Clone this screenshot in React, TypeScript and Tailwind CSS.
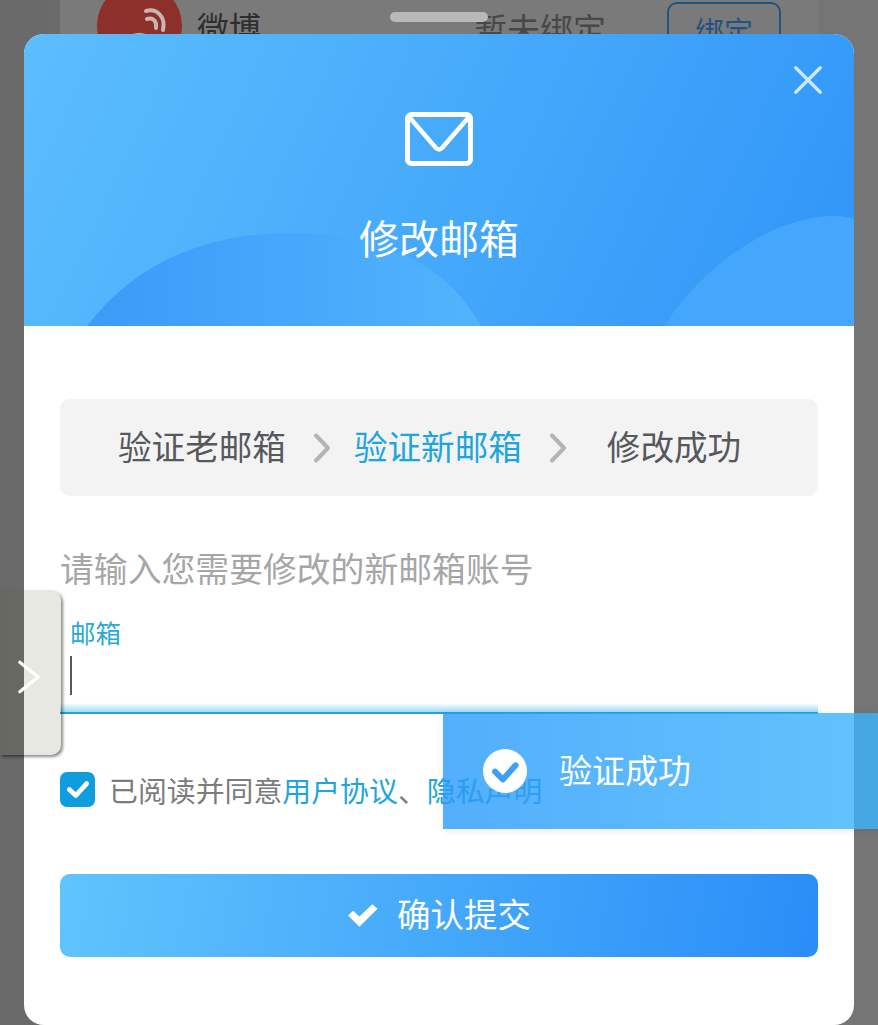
import React from "react";

const font = { fontFamily: '"Noto Sans CJK SC", "Noto Sans", sans-serif' };

function Chevron({ className }: { className?: string }) {
  return (
    <svg viewBox="0 0 20 30" className={className} fill="none" stroke="currentColor" strokeWidth="4" strokeLinecap="round" strokeLinejoin="round">
      <path d="M5 2.5 L17 15 L5 27.5" />
    </svg>
  );
}

function Step({ text, active, className }: { text: string; active?: boolean; className?: string }) {
  return <span className={`text-[33.6px] leading-none whitespace-nowrap ${active ? "text-[#1ea5dc]" : "text-[#56585c]"} ${className ?? ""}`}>{text}</span>;
}

export default function App() {
  return (
    <div style={font} className="relative h-[1025px] w-[878px] overflow-hidden bg-gradient-to-r from-[#696969] via-[#757575] to-[#757575]">
      {/* page behind the sheet */}
      <div className="mx-[60px] flex h-[34px] items-start overflow-hidden bg-[#7a7a7a] pl-[37px]">
        <div className="relative h-[85px] w-[85px] -translate-y-[17px] shrink-0 overflow-hidden rounded-full bg-[#8d302c]">
          <svg viewBox="0 0 85 85" className="h-full w-full" fill="none" stroke="#c9b5b0" strokeLinecap="round">
            <ellipse cx="38" cy="66" rx="18" ry="12" strokeWidth="6" transform="rotate(-20 38 66)" />
            <path d="M50 36 C56 34 60 38 59 45" strokeWidth="4" />
            <path d="M49 28 C60 25 69 34 66 47" strokeWidth="4" />
          </svg>
        </div>
        <span className="ml-[15px] mt-[4px] text-[32px] leading-[44px] text-[#2e2e2e]">微博</span>
        <span className="ml-[213px] mt-[6px] text-[33px] leading-[44px] text-[#484848]">暂未绑定</span>
        <div className="ml-[61px] mt-[2px] flex h-[50px] w-[114px] shrink-0 items-start justify-center rounded-[10px] border-2 border-[#1f5480] pt-[8px] text-[29px] leading-[36px] text-[#1f5480]">绑定</div>
      </div>

      {/* drag handle */}
      <div className="absolute left-[390px] top-[12px] z-20 h-[10px] w-[98px] rounded-full bg-[#b9b9b9]" />

      {/* sheet */}
      <div className="absolute left-[24px] top-[34px] h-[991px] w-[830px] overflow-hidden rounded-[20px] bg-white">
        <div className="relative flex h-[292px] flex-col items-center overflow-hidden bg-[linear-gradient(115deg,#5cbefd_0%,#46aafb_50%,#3094f8_100%)]">
          <svg viewBox="0 0 830 292" className="absolute inset-0 h-full w-full">
            <defs>
              <linearGradient id="hill" x1="0" x2="1" y1="0" y2="0">
                <stop offset="0" stopColor="#3a9bf9" />
                <stop offset="1" stopColor="#52b3fd" />
              </linearGradient>
            </defs>
            <path d="M63 292 C110 230 180 199 268 199 C350 199 420 225 457 292 Z" fill="url(#hill)" />
            <path d="M640 292 C680 230 750 182 810 182 C818 182 825 183 830 185 L830 292 Z" fill="#45a7fb" />
          </svg>
          <svg viewBox="0 0 24 24" className="absolute right-[32px] top-[32px] h-[28px] w-[28px] text-[#cbe8fe]" fill="none" stroke="currentColor" strokeWidth="2.8" strokeLinecap="round">
            <path d="M1.5 1.5 L22.5 22.5 M22.5 1.5 L1.5 22.5" />
          </svg>
          <svg viewBox="0 0 68 54" className="relative mt-[78px] h-[54px] w-[68px]" fill="none" stroke="white" strokeLinejoin="round" strokeLinecap="round">
            <rect x="2.5" y="2.5" width="63" height="49" rx="4" strokeWidth="5" />
            <path d="M5 6 L31 36 Q34 39 37 36 L63 6" strokeWidth="4.5" />
          </svg>
          <h1 className="relative mt-[41px] text-[40px] font-normal leading-[60px] text-white">修改邮箱</h1>
        </div>

        <div className="px-[36px] pt-[73px]">
          <div className="flex h-[97px] items-center rounded-[10px] bg-[#f3f3f4] pb-[4px] pl-[58px]">
            <Step text="验证老邮箱" />
            <Chevron className="ml-[25px] mt-[4px] h-[30px] w-[20px] text-[#b4b4b4]" />
            <Step text="验证新邮箱" active className="ml-[23px]" />
            <Chevron className="ml-[25px] mt-[4px] h-[30px] w-[20px] text-[#b4b4b4]" />
            <Step text="修改成功" className="ml-[40px]" />
          </div>

          <p className="mt-[50px] text-[33.85px] leading-[44px] whitespace-nowrap text-[#a6a6a6]">请输入您需要修改的新邮箱账号</p>

          <div className="relative mt-[24px] h-[100px] border-b-2 border-[#1ea5dc] pl-[10px]">
            <div className="text-[25.5px] leading-[36px] text-[#28a9de]">邮箱</div>
            <div className="mt-[6px] h-[39px] w-[2px] bg-[#55585c]" />
            <div className="absolute inset-x-0 bottom-0 h-[9px] bg-gradient-to-t from-[#9edcf6] to-transparent" />
          </div>

          <div className="mt-[55px] flex items-center">
            <div className="flex h-[35px] w-[35px] shrink-0 items-center justify-center rounded-[7px] bg-[#0f9de0]">
              <svg viewBox="0 0 24 24" className="h-[26px] w-[26px]" fill="none" stroke="white" strokeWidth="4.4" strokeLinejoin="round" strokeLinecap="round">
                <path d="M4 12.5 L10 18 L20 7" />
              </svg>
            </div>
            <p className="ml-[14px] text-[28.9px] leading-[40px] whitespace-nowrap text-[#7b7c7e]">
              已阅读并同意<span className="text-[#1ea5dc]">用户协议</span>、<span className="text-[#1ea5dc]">隐私声明</span>
            </p>
          </div>

          <button className="mt-[65px] flex h-[83px] w-full items-center justify-center rounded-[10px] bg-[linear-gradient(100deg,#60c4fd,#2a8df8)] pb-[4px] text-[33.5px] text-white">
            <svg viewBox="0 0 30 24" className="mr-[19px] mt-[4px] h-[25px] w-[31px]" fill="white">
              <path d="M1 12 L6 7.5 L12 13 L24.5 1 L29.5 5.5 L12 23 Z" />
            </svg>
            确认提交
          </button>
        </div>
      </div>

      {/* side tab */}
      <div className="absolute left-0 top-[590px] flex h-[165px] w-[61px] items-center rounded-r-[10px] bg-[rgba(102,98,70,0.15)] shadow-[2px_2px_3px_rgba(0,0,0,0.45)]">
        <svg viewBox="0 0 26 36" className="ml-[17px] mt-[9px] h-[34px] w-[24px]" fill="none" stroke="white" strokeWidth="3.4" strokeLinecap="round" strokeLinejoin="round">
          <path d="M3 2 L23 18 L3 34" />
        </svg>
      </div>

      {/* toast */}
      <div className="absolute left-[443px] top-[713px] flex h-[116px] w-[435px] items-center bg-[linear-gradient(90deg,rgba(41,154,251,0.8),rgba(58,180,252,0.8))] pb-[4px] pl-[40px] shadow-[0_2px_8px_rgba(0,0,0,0.08)]">
        <div className="mt-[4px] flex h-[44px] w-[44px] items-center justify-center rounded-full bg-white">
          <svg viewBox="0 0 24 24" className="h-[34px] w-[34px]" fill="none" stroke="#3f9ff5" strokeWidth="4.2" strokeLinecap="round" strokeLinejoin="round">
            <path d="M5 12.5 L10.5 18 L19.5 8" />
          </svg>
        </div>
        <span className="ml-[32px] text-[33px] leading-none text-white">验证成功</span>
      </div>
    </div>
  );
}
